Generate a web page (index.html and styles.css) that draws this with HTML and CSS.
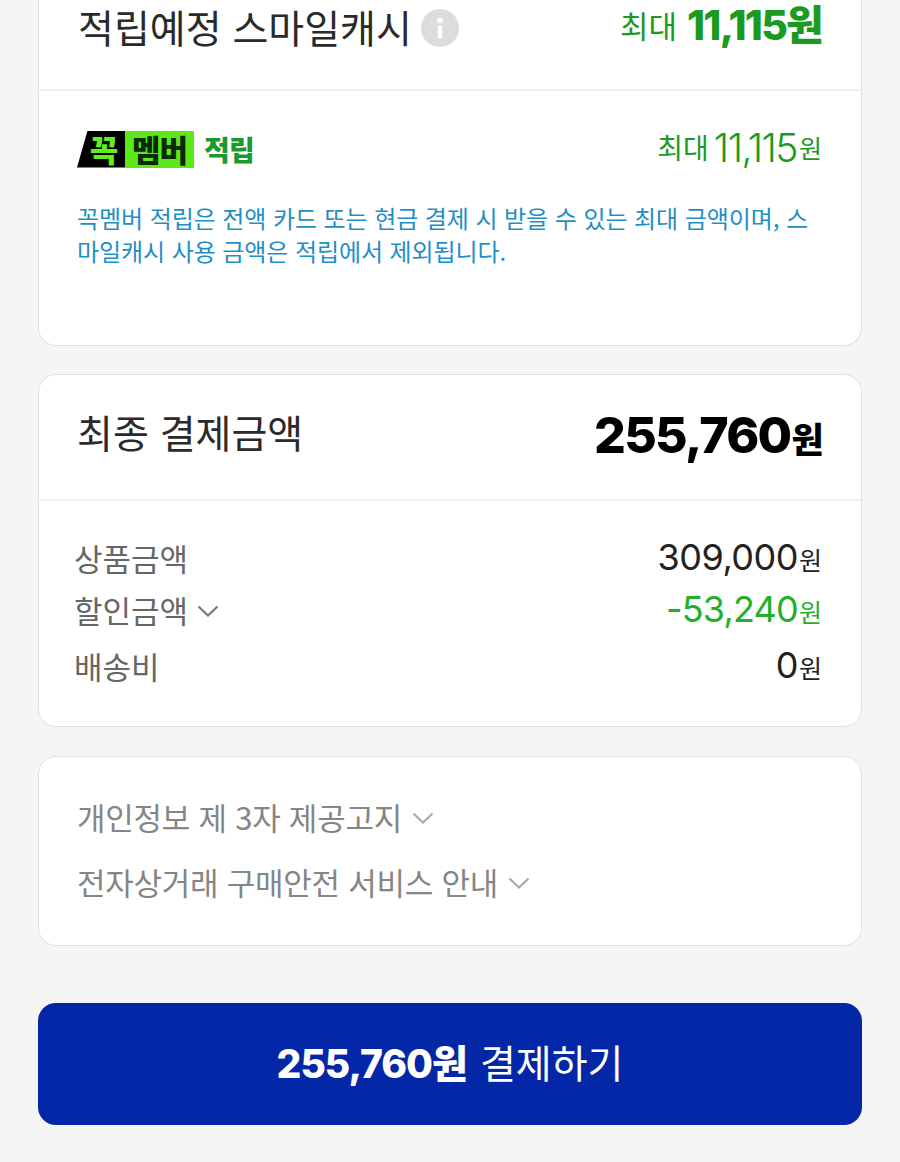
FILE: index.html
```html
<!DOCTYPE html>
<html lang="ko">
<head>
<meta charset="utf-8">
<title>결제</title>
<link rel="stylesheet" href="styles.css">
</head>
<body>
<main class="page">
  <section class="card card-top">
    <div class="head head-top">
      <div class="title-wrap">
        <span class="title">적립예정 스마일캐시</span>
        <svg class="info" viewBox="0 0 38 38" width="38" height="38" aria-hidden="true"><circle cx="19" cy="19" r="19" fill="#dcdcdc"/><circle cx="19" cy="11.5" r="2.8" fill="#fff"/><rect x="16.6" y="16.5" width="4.8" height="13" rx="1" fill="#fff"/></svg>
      </div>
      <div class="max-total"><span class="max-label">최대</span><span class="max-num">11,115원</span></div>
    </div>
    <div class="member-body">
      <div class="member-row">
        <div class="member-badge">
          <span class="badge-black">꼭</span><span class="badge-green">멤버</span><span class="badge-text">적립</span>
        </div>
        <div class="member-amt"><span class="amt-label">최대</span><span class="amt-num">11,115</span><span class="amt-unit">원</span></div>
      </div>
      <p class="notice">꼭멤버 적립은 전액 카드 또는 현금 결제 시 받을 수 있는 최대 금액이며, 스마일캐시 사용 금액은 적립에서 제외됩니다.</p>
    </div>
  </section>

  <section class="card card-final">
    <div class="head head-final">
      <span class="final-title">최종 결제금액</span>
      <span class="final-amt">255,760<span class="final-unit">원</span></span>
    </div>
    <div class="rows">
      <div class="row row-a"><span class="row-label">상품금액</span><span class="row-val">309,000<span class="unit">원</span></span></div>
      <div class="row row-b"><span class="row-label">할인금액<svg class="chev chev-sm" viewBox="0 0 22 12" aria-hidden="true"><path d="M1.5 1.5 11 10.5 20.5 1.5"/></svg></span><span class="row-val green">-53,240<span class="unit">원</span></span></div>
      <div class="row row-c"><span class="row-label">배송비</span><span class="row-val">0<span class="unit">원</span></span></div>
    </div>
  </section>

  <section class="card card-links">
    <div class="link-row">개인정보 제 3자 제공고지<svg class="chev" viewBox="0 0 22 12" aria-hidden="true"><path d="M1.5 1.5 11 10.5 20.5 1.5"/></svg></div>
    <div class="link-row">전자상거래 구매안전 서비스 안내<svg class="chev" viewBox="0 0 22 12" aria-hidden="true"><path d="M1.5 1.5 11 10.5 20.5 1.5"/></svg></div>
  </section>

  <button class="pay" type="button"><b>255,760원</b> 결제하기</button>
</main>
</body>
</html>
```
FILE: styles.css
```css
* { box-sizing: border-box; }
html, body { margin: 0; padding: 0; }
body {
  background: #f5f5f6;
  font-family: "Noto Sans CJK KR", "Noto Sans", sans-serif;
  color: #222;
}
.page {
  width: 900px;
  height: 1162px;
  overflow: hidden;
  padding: 0 38px;
  display: flex;
  flex-direction: column;
}
.card {
  background: #fff;
  border: 1px solid #e0e0e0;
  border-radius: 18px;
}
.card-top {
  height: 346px;
  border-top: 0;
  border-radius: 0 0 18px 18px;
  flex: none;
}
.head {
  display: flex;
  justify-content: space-between;
  align-items: center;
  border-bottom: 2px solid #efefef;
}
.head-top { height: 91px; padding: 0 39px; align-items: flex-start; }
.title-wrap { display: flex; align-items: center; gap: 10px; height: 52px; }
.title { font-size: 39px; line-height: 52px; color: #2a2a2a; }
.info { flex: none; margin-top: 4px; margin-left: -1px; }
.max-total { display: flex; align-items: center; gap: 10px; color: #1a9a1f; height: 50px; }
.max-label { font-size: 31px; line-height: 50px; }
.max-num { font-family: Inter, "Noto Sans CJK KR", sans-serif; font-size: 41px; line-height: 50px; font-weight: 800; letter-spacing: -1.8px; }
.member-body { padding: 0 39px 0 38px; }
.member-row {
  display: flex;
  justify-content: space-between;
  align-items: center;
  height: 40px;
  margin-top: 38px;
}
.member-badge { display: flex; align-items: center; height: 37px; }
.badge-black {
  width: 48px;
  height: 37px;
  background: #000;
  color: #62f01a;
  clip-path: polygon(22% 0, 100% 0, 100% 100%, 0 100%);
  font-size: 31px;
  font-weight: 900;
  line-height: 35px;
  text-align: center;
  padding-left: 6px;
}
.badge-green {
  width: 69px;
  height: 37px;
  background: #5de81a;
  color: #0a2a05;
  font-size: 31px;
  font-weight: 900;
  line-height: 35px;
  text-align: center;
  letter-spacing: -1px;
}
.badge-text { margin-left: 10px; color: #1a9a2c; font-size: 28px; font-weight: 900; letter-spacing: -0.8px; }
.member-amt { display: flex; align-items: center; color: #1a9a1f; margin-top: -4px; }
.amt-label { font-size: 28px; margin-right: 5px; }
.amt-num { font-family: Inter, sans-serif; font-size: 39px; letter-spacing: -1.5px; font-weight: 300; }
.amt-unit { font-size: 25px; margin-left: 2px; }
.notice {
  margin: 32px 0 0;
  font-size: 24px;
  line-height: 33px;
  letter-spacing: -0.08px;
  color: #1f8fc4;
}
.card-final { height: 353px; margin-top: 28px; flex: none; }
.head-final { height: 126px; padding: 0 39px 0 38px; }
.final-title { font-size: 39px; color: #2a2a2a; margin-top: -12px; }
.final-amt { font-family: Inter, sans-serif; font-size: 50px; font-weight: 800; color: #000; letter-spacing: -1.7px; margin-top: -4px; }
.final-unit { font-family: "Noto Sans CJK KR", sans-serif; font-size: 35px; font-weight: 900; margin-left: 1px; }
.rows { padding: 0 39px 0 35px; }
.row { display: flex; justify-content: space-between; align-items: center; height: 40px; }
.row-a { margin-top: 36px; }
.row-b { margin-top: 12px; }
.row-c { margin-top: 16px; }
.row-label { display: flex; align-items: center; font-size: 31px; color: #666; }
.row-val { font-family: Inter, sans-serif; font-size: 36px; font-weight: 400; color: #222; letter-spacing: -0.5px; }
.row-val.green { color: #22b02a; letter-spacing: -0.8px; }
.unit { font-family: "Noto Sans CJK KR", sans-serif; font-size: 25px; font-weight: 400; margin-left: 1px; letter-spacing: 0; }
.chev { width: 22px; height: 12px; margin-left: 10px; margin-top: 4px; fill: none; stroke: #aaa; stroke-width: 2.2; flex: none; }
.chev-sm { stroke: #777; margin-left: 9px; }
.card-links { height: 190px; margin-top: 29px; padding: 35px 38px 0; flex: none; }
.link-row { display: flex; align-items: center; height: 48px; font-size: 31px; color: #858585; margin-bottom: 17px; letter-spacing: -0.25px; }
.pay {
  flex: none;
  margin-top: 57px;
  height: 122px;
  border: 0;
  border-radius: 18px;
  background: #0327a6;
  color: #fff;
  font-family: "Noto Sans CJK KR", sans-serif;
  font-size: 39px;
  padding-bottom: 8px;
}
.pay b { font-family: Inter, "Noto Sans CJK KR", sans-serif; font-weight: 800; font-size: 39px; letter-spacing: -1px; margin-right: 2px; }
```
